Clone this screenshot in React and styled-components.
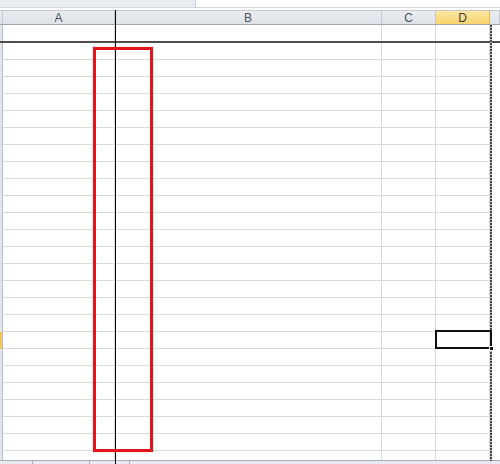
import React from "react";
import styled, { createGlobalStyle } from "styled-components";

const Global = createGlobalStyle`
  html, body { margin: 0; padding: 0; background: #fff; }
  body { font-family: "Liberation Sans", Arial, sans-serif; overflow: hidden; }
`;

const COLS = "3px 112px 267px 54px 54px 1fr";

const Sheet = styled.div`
  position: relative;
  width: 500px;
  height: 464px;
  overflow: hidden;
  display: flex;
  flex-direction: column;
  background: #fff;
`;

const TopStrip = styled.div`
  display: flex;
  height: 8px;
  flex: none;
  border-bottom: 1px solid #d3d7dc;
  box-sizing: border-box;
`;

const TopLeft = styled.div`
  width: 195px;
  background: #e9ecf0;
  border-right: 1px solid #c9cdd3;
`;

const TopRight = styled.div`
  flex: 1;
  background: #fff;
`;

const Spacer = styled.div`
  height: 2px;
  flex: none;
`;

const HeaderRow = styled.div`
  display: grid;
  grid-template-columns: ${COLS};
  height: 15px;
  flex: none;
  box-sizing: border-box;
  border-top: 1px solid #c5cad1;
  border-bottom: 1px solid #9ea7b2;
`;

const HeaderCell = styled.div`
  display: flex;
  align-items: center;
  justify-content: center;
  font-size: 12px;
  color: ${(p) => (p.$active ? "#3b3b3b" : "#4a5563")};
  background: ${(p) =>
    p.$active
      ? "linear-gradient(#fbe7a2, #f7d46f)"
      : "linear-gradient(#e9ecf0, #dfe3e8)"};
  border-right: 1px solid ${(p) => (p.$active ? "#e2b64a" : "#c3c9d1")};
  box-sizing: border-box;
  line-height: 1;
`;

const Grid = styled.div`
  flex: 1;
  overflow: hidden;
  display: flex;
  flex-direction: column;
`;

const Row = styled.div`
  display: grid;
  grid-template-columns: ${COLS};
  height: ${(p) => (p.$frozen ? 18 : 17)}px;
  flex: none;
  box-sizing: border-box;
  border-bottom: ${(p) => (p.$frozen ? "2px solid #4d4d4d" : "none")};
`;

const RowHead = styled.div`
  background: ${(p) => (p.$active ? "#f3c654" : "#e3e6ea")};
  border-right: 1px solid #b7bec7;
  box-sizing: border-box;
`;

const Cell = styled.div`
  box-sizing: border-box;
  border-right: 1px solid #dadcdf;
  border-bottom: ${(p) => (p.$noBottom ? "none" : "1px solid #dadcdf")};
`;

const Filler = styled.div``;

const TabBar = styled.div`
  height: 3px;
  flex: none;
  background: #e6e9ed;
  border-top: 1px solid #a6adb6;
  display: flex;
`;

const Tab = styled.div`
  width: ${(p) => p.$w}px;
  border-right: 1px solid #a6adb6;
  box-sizing: border-box;
`;

const Overlay = styled.div`
  position: absolute;
  pointer-events: none;
`;

const SplitLine = styled(Overlay)`
  left: 115px;
  top: 10px;
  width: 1px;
  bottom: 0;
  background: #000;
`;

const PageBreak = styled(Overlay)`
  left: 490px;
  top: 25px;
  width: 2px;
  bottom: 3px;
  background: repeating-linear-gradient(
    to bottom,
    #4a4a4a 0 2px,
    #bdbdbd 2px 3px
  );
`;

const RedBox = styled(Overlay)`
  left: 93px;
  top: 47px;
  width: 60px;
  height: 405px;
  box-sizing: border-box;
  border: 3px solid #e2151d;
  box-shadow: 0 0 1px rgba(226, 21, 29, 0.5);
`;

const Selection = styled(Overlay)`
  left: 435px;
  top: 330px;
  width: 57px;
  height: 19px;
  box-sizing: border-box;
  border: 2px solid #111;
`;

const FillHandle = styled(Overlay)`
  left: 489px;
  top: 346px;
  width: 5px;
  height: 5px;
  background: #111;
  border: 1px solid #fff;
  box-sizing: border-box;
`;

const cols = ["A", "B", "C", "D"];

export default function App() {
  const rows = Array.from({ length: 26 }, (_, i) => i + 2);
  return (
    <Sheet>
      <Global />
      <TopStrip>
        <TopLeft />
        <TopRight />
      </TopStrip>
      <Spacer />
      <HeaderRow>
        <HeaderCell />
        {cols.map((c) => (
          <HeaderCell key={c} $active={c === "D"}>
            {c}
          </HeaderCell>
        ))}
        <HeaderCell />
      </HeaderRow>
      <Grid>
        <Row $frozen>
          <RowHead />
          {cols.map((c) => (
            <Cell key={c} $noBottom />
          ))}
          <Filler />
        </Row>
        {rows.map((r) => (
          <Row key={r}>
            <RowHead $active={r === 19} />
            {cols.map((c) => (
              <Cell key={c} />
            ))}
            <Filler />
          </Row>
        ))}
      </Grid>
      <TabBar>
        <Tab $w={33} />
        <Tab $w={57} />
        <Tab $w={40} />
      </TabBar>
      <SplitLine />
      <PageBreak />
      <RedBox />
      <Selection />
      <FillHandle />
    </Sheet>
  );
}
